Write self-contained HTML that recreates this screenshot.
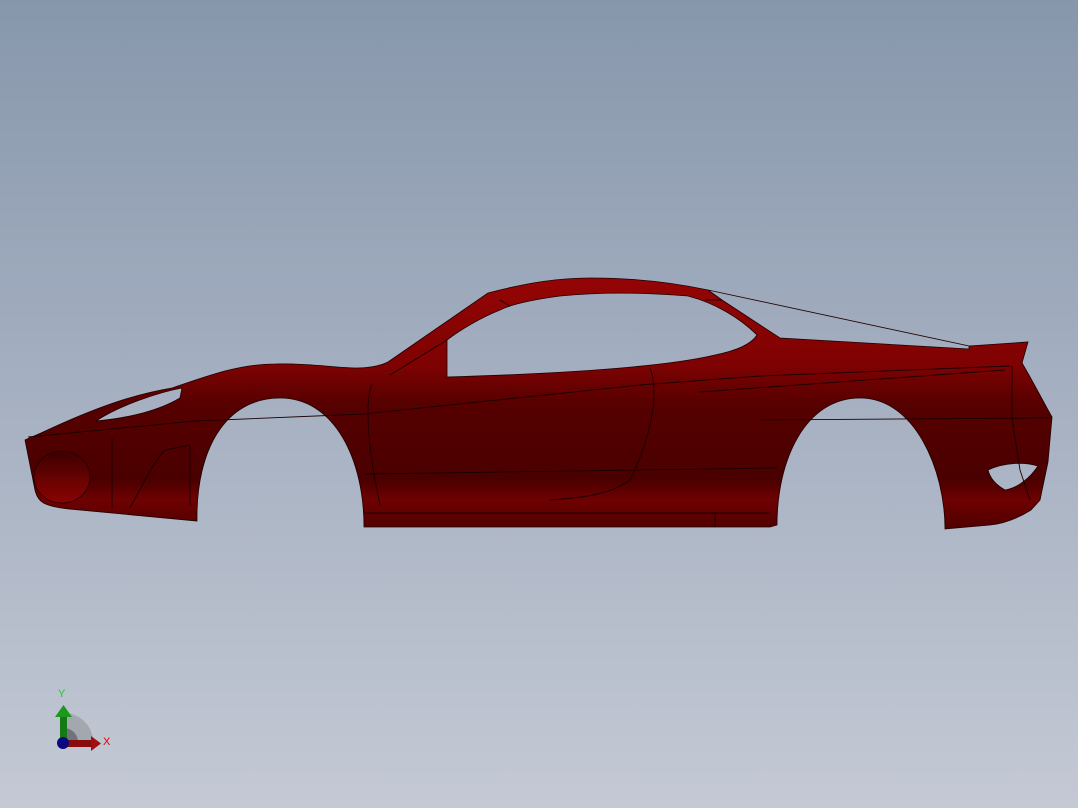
<!DOCTYPE html>
<html><head><style>
html,body{margin:0;padding:0;width:1078px;height:808px;overflow:hidden}
body{background:linear-gradient(#8797ab,#a3aec0 45%,#c4c9d4)}
svg{position:absolute;left:0;top:0}
</style></head><body>
<svg width="1078" height="808" viewBox="0 0 1078 808">
<defs>
<linearGradient id="b" x1="0" y1="278" x2="0" y2="530" gradientUnits="userSpaceOnUse">
<stop offset="0" stop-color="#950404"/>
<stop offset="0.35" stop-color="#7e0202"/>
<stop offset="0.5" stop-color="#560000"/>
<stop offset="0.8" stop-color="#4a0000"/>
<stop offset="0.88" stop-color="#6e0101"/>
<stop offset="1" stop-color="#4e0000"/>
</linearGradient>
<linearGradient id="h" x1="0" y1="452" x2="0" y2="502" gradientUnits="userSpaceOnUse">
<stop offset="0" stop-color="#3e0000"/><stop offset="1" stop-color="#8a0303"/>
</linearGradient>
</defs>
<path fill="url(#b)" fill-rule="evenodd" stroke="#200000" stroke-width="0.8" d="
M25,440 L41,433 C90,410 130,395 172,388 C210,375 240,364 275,364 C310,363 335,368 357,368 C370,368 380,366 388,362
L488,293 C530,282 560,278 591,278 C640,278 680,284 708,290 L969,346 L1028,342 L1022,363 C1035,385 1045,405 1052,417 L1048,462 L1040,500 L1031,510 C1015,520 1000,524 990,525 L945,529
C945,470 915,398 860,398 C805,398 777,460 777,525 L770,527 L364,527
C364,460 335,398 280,398 C225,398 196,450 197,521 L69,509 C45,506 38,503 35,490 Z
M447,340 L447,377 C550,374 660,368 715,355 C740,350 752,343 757,335 C740,318 715,303 688,296 C640,292 600,292 560,296 C530,300 510,305 500,310 C480,318 460,330 447,340 Z
M708,290 L969,346 L969,349 L780,338 L722,300 Z
M96,421 C120,405 160,392 182,388 L180,398 C160,410 130,418 96,421 Z
M988,470 C1005,462 1025,462 1038,466 C1030,478 1018,488 1005,490 C996,485 990,478 988,470 Z
"/>
<ellipse cx="62" cy="477" rx="28" ry="26" fill="url(#h)" stroke="#200000" stroke-width="0.8"/>
<g stroke="#1a0000" stroke-width="0.9" fill="none">
<path d="M28,437 L195,421 L364,414 L640,385 L760,376 L1010,366"/>
<path d="M700,392 L1005,370"/>
<path d="M760,420 L1050,418"/>
<path d="M364,474 L777,468"/>
<path d="M364,513 L770,513"/>
<path d="M372,384 C365,400 368,440 375,480 L380,505"/>
<path d="M650,368 C660,395 650,440 630,480 C610,495 580,498 550,500"/>
<path d="M112,438 L112,508"/>
<path d="M130,508 C145,480 155,460 165,450 L190,445 L190,505"/>
<path d="M447,340 L390,375"/>
<path d="M500,300 L510,306"/>
<path d="M705,300 L722,300"/>
<path d="M1012,366 L1012,418 L1020,470 L1030,500"/>
<path d="M715,513 L715,527"/>
</g>
<g>
<path d="M64,742 L64,713 A29,29 0 0 1 93,742 Z" fill="#a3a7ae"/>
<path d="M64,742 L64,728 A14,14 0 0 1 78,742 Z" fill="#6f737a"/>
<rect x="60" y="716" width="7" height="27" fill="#157a15"/>
<polygon points="55,717 63.5,705 72,717" fill="#1a9a1a"/>
<rect x="64" y="740" width="28" height="7" fill="#8a0b0b"/>
<polygon points="91,736 101,743.5 91,751" fill="#a01010"/>
<circle cx="63" cy="743" r="6" fill="#0a0a80"/>
<text x="58" y="697" font-family="Liberation Sans,sans-serif" font-size="11" fill="#22cc22">Y</text>
<text x="103" y="745" font-family="Liberation Sans,sans-serif" font-size="11" fill="#e00000">X</text>
</g>
</svg>
</body></html>
